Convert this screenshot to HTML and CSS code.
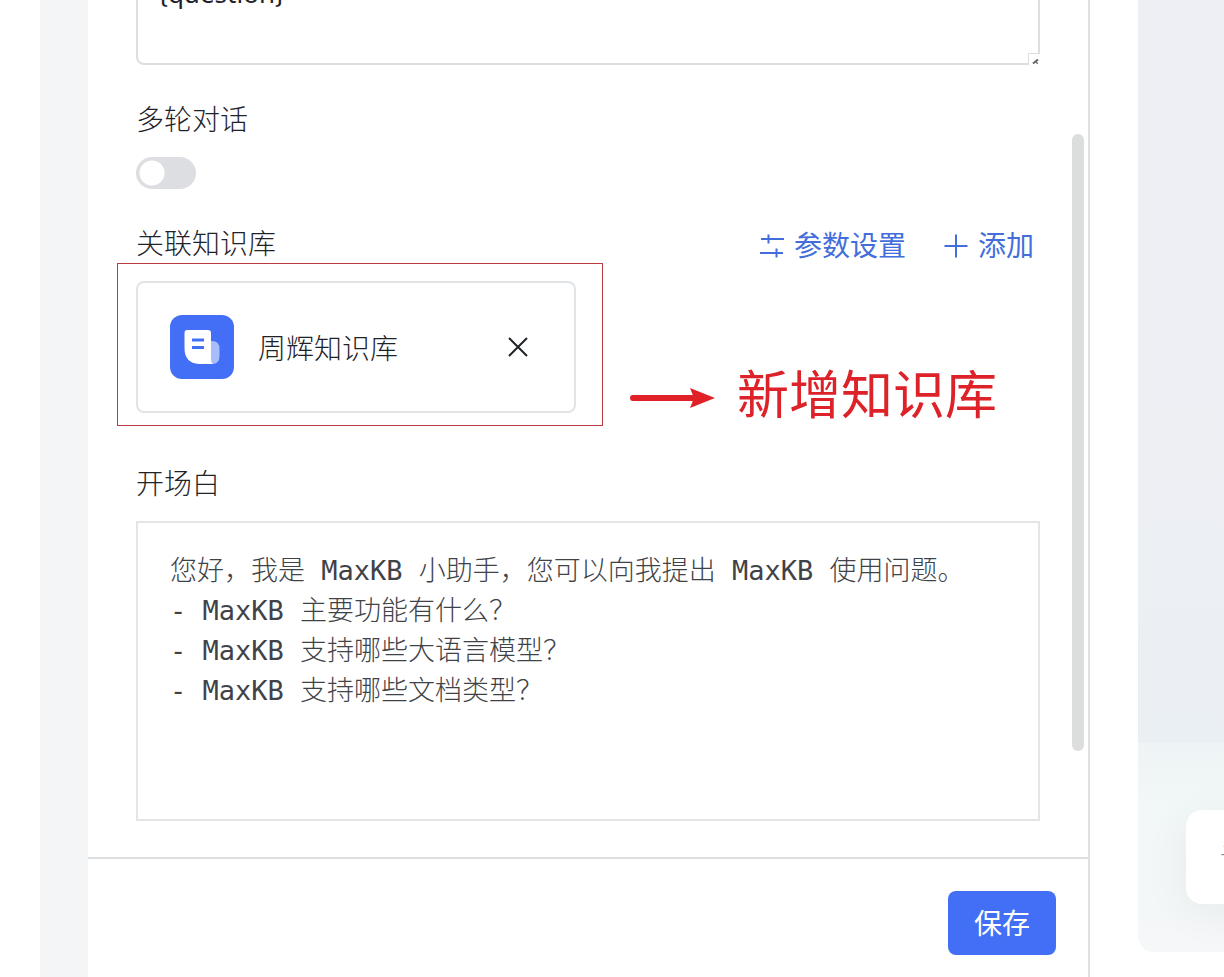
FILE: index.html
```html
<!DOCTYPE html>
<html lang="zh-CN">
<head>
<meta charset="utf-8">
<meta name="viewport" content="width=device-width, initial-scale=1">
<title>应用设置</title>
<link rel="stylesheet" href="styles.css">
</head>
<body>
<div class="app">
  <div class="gutter"></div>
  <main class="panel">
    <div class="panel-scroll">
      <form class="form" id="settings">
        <div class="prompt">
          <textarea class="prompt-input" aria-label="提示词">{question}</textarea>
          <svg class="resizer" viewBox="0 0 12 12" aria-hidden="true">
            <path class="resizer-edge" d="M.5 12V.5H12"/>
            <path class="resizer-grip" d="M5 10.500l5-4M8.500 10.500l1-1"/>
          </svg>
        </div>

        <div class="field">
          <label class="label" for="multi">多轮对话</label>
          <input class="switch" type="checkbox" role="switch" id="multi">
        </div>

        <section class="field" aria-labelledby="kb-title">
          <div class="field-head">
            <h2 class="label" id="kb-title">关联知识库</h2>
            <div class="actions">
              <button class="link-btn" type="button">
                <svg class="link-icon" viewBox="0 0 24 28" aria-hidden="true"><path d="M1 9h23M8.500 4.500v9M0 23h23M16.500 18.500v9"/></svg>
                <span>参数设置</span>
              </button>
              <button class="link-btn" type="button">
                <svg class="link-icon" viewBox="0 0 24 28" aria-hidden="true"><path d="M.5 16h23M12 4.500v23"/></svg>
                <span>添加</span>
              </button>
            </div>
          </div>
          <div class="kb-grid">
            <div class="kb-cell">
              <article class="kb-card">
                <svg class="kb-icon" viewBox="0 0 64 64" aria-hidden="true">
                  <rect width="64" height="64" rx="12" fill="#426ff5"/>
                  <path d="M38 26h4q7.500 0 7.500 8v7q0 8-7.500 8h-4z" fill="#a9bdfb"/>
                  <path d="M17 15h21q3 0 3 3v12q0 3 0 15 0 3 2.500 4H29Q14.500 48 14.500 33V18q0-3 2.500-3z" fill="#fff"/>
                  <path d="M22 25h12M22 32.500h12" stroke="#426ff5" stroke-width="3"/>
                </svg>
                <span class="kb-name">周辉知识库</span>
                <button class="close" type="button" aria-label="移除">
                  <svg class="close-icon" viewBox="0 0 20 20" aria-hidden="true"><path d="M1 1l18 18M19 1L1 19"/></svg>
                </button>
              </article>
              <div class="mark-box"></div>
            </div>
            <div class="mark-note">
              <svg class="mark-arrow" viewBox="0 0 85 36" aria-hidden="true">
                <path d="M3 24h64" stroke="#e02128" stroke-width="6" stroke-linecap="round"/>
                <path d="M60 14l25 10-25 10 4-10z" fill="#e02128"/>
              </svg>
              <span class="mark-text">新增知识库</span>
            </div>
          </div>
        </section>

        <div class="field">
          <label class="label" for="prologue">开场白</label>
          <textarea class="prologue" id="prologue">您好，我是 MaxKB 小助手，您可以向我提出 MaxKB 使用问题。
- MaxKB 主要功能有什么？
- MaxKB 支持哪些大语言模型？
- MaxKB 支持哪些文档类型？</textarea>
        </div>
      </form>
      <div class="scroll-thumb"></div>
    </div>
    <footer class="footer">
      <button class="save" type="submit" form="settings">保存</button>
    </footer>
  </main>
  <aside class="preview">
    <div class="preview-body"></div>
    <div class="preview-foot">
      <input class="ask" type="text" placeholder="请输入" aria-label="请输入">
    </div>
  </aside>
</div>
</body>
</html>
```
FILE: styles.css
```css
* { box-sizing: border-box; }

body {
  margin: 0;
  color: #1f2329;
  background: #fff;
  font-family: "Noto Sans CJK SC", sans-serif;
  font-size: 28px;
  font-weight: 300;
  line-height: 42px;
}

button, input, textarea { font: inherit; color: inherit; margin: 0; }
button { border: 0; padding: 0; background: none; cursor: pointer; }
svg { display: block; flex: none; }

.app {
  display: flex;
  height: 100vh;
  padding-left: 40px;
  overflow: hidden;
}

.gutter { flex: none; width: 48px; background: #f4f5f7; }

.panel {
  display: flex;
  flex: 1;
  flex-direction: column;
  min-width: 0;
  border-right: 2px solid #dfe1e1;
}

.panel-scroll {
  position: relative;
  display: flex;
  flex: 1;
  flex-direction: column;
  justify-content: flex-end;
  min-height: 0;
  overflow: hidden;
}

.form {
  display: flex;
  flex-direction: column;
  gap: 32px;
  padding: 0 48px 36px;
}

.scroll-thumb {
  position: absolute;
  top: 134px;
  right: 4px;
  width: 12px;
  height: 72%;
  border-radius: 6px;
  background: #dcdedd;
}

.prompt { position: relative; }

.prompt-input {
  display: block;
  width: 100%;
  height: 160px;
  padding: 64px 20px 0;
  border: 2px solid #dcdedf;
  border-radius: 8px;
  background: none;
  font-family: "Noto Sans", "Noto Sans CJK SC", sans-serif;
  font-size: 26px;
  font-weight: 400;
  line-height: 44px;
  resize: none;
}

.resizer {
  position: absolute;
  right: 0;
  bottom: 0;
  width: 12px;
  height: 12px;
  background: #fff;
  fill: none;
}
.resizer-edge { stroke: #dcdedf; }
.resizer-grip { stroke: #666; stroke-width: 2; }

.field { display: flex; flex-direction: column; gap: 18px; }
.field-head { display: flex; justify-content: space-between; }
.label { margin: 0; font-size: 28px; font-weight: 300; }

.switch {
  width: 60px;
  height: 32px;
  border-radius: 16px;
  background: radial-gradient(circle at 16px 16px, #fff 12px, #dcdee2 13px);
  appearance: none;
}

.actions { display: flex; gap: 38px; padding: 2px 6px 0 0; margin-bottom: -2px; }

.link-btn {
  display: flex;
  align-items: center;
  gap: 10px;
  color: #426ddb;
  font-weight: 400;
}

.link-icon {
  width: 24px;
  height: 28px;
  fill: none;
  stroke: #426ddb;
  stroke-width: 2;
}

.kb-grid {
  display: grid;
  grid-template-columns: 1fr 1fr;
  gap: 24px;
  padding-bottom: 16px;
}

.kb-cell { position: relative; }

.kb-card {
  display: flex;
  align-items: center;
  gap: 24px;
  padding: 32px;
  border: 2px solid #e1e4e6;
  border-radius: 8px;
}

.kb-icon { width: 64px; height: 64px; }
.kb-name { flex: 1; }

.close {
  display: grid;
  place-items: center;
  width: 48px;
  height: 48px;
}
.close-icon { width: 20px; height: 20px; stroke: #1f2329; stroke-width: 2; }

.mark-box {
  position: absolute;
  inset: -18px -27px -13px -19px;
  border: 1px solid #b83b42;
  pointer-events: none;
}

.mark-note {
  display: flex;
  align-items: center;
  gap: 22px;
  padding: 90px 0 0 30px;
  height: 132px;
}
.mark-arrow { width: 85px; height: 36px; }
.mark-text {
  color: #dd2229;
  font-size: 52px;
  font-weight: 400;
  line-height: 60px;
  white-space: nowrap;
}

.prologue {
  display: block;
  width: 100%;
  height: 300px;
  padding: 28px 32px;
  border: 2px solid #e4e6e6;
  border-radius: 0;
  background: none;
  color: #3f4347;
  font-family: "DejaVu Sans Mono", "Noto Sans CJK SC", monospace;
  font-size: 27px;
  line-height: 40px;
  resize: none;
}

.footer {
  display: flex;
  justify-content: flex-end;
  height: 120px;
  padding: 32px;
  border-top: 2px solid #dcdedf;
}

.save {
  width: 108px;
  height: 64px;
  padding-bottom: 2px;
  border-radius: 8px;
  background: #426ff5;
  color: #fff;
  font-weight: 400;
}

.preview {
  display: flex;
  flex: none;
  flex-direction: column;
  width: 86px;
  margin: 0 0 25px 48px;
  border-bottom-left-radius: 16px;
  overflow: hidden;
}

.preview-body {
  flex: 1;
  background: linear-gradient(#eeeff4 0%, #eeeff4 50%, #eaeff3 100%);
}

.preview-foot {
  padding: 67px 0 48px 48px;
  background: linear-gradient(#eef3f5, #f2f7f7 30%, #f5f7f8);
}

.ask {
  display: block;
  width: 240px;
  height: 94px;
  padding: 0 34px;
  border: 0;
  border-radius: 16px;
  background: #fff;
  box-shadow: 0 8px 48px rgba(31, 35, 41, 0.06);
}
.ask::placeholder { color: #8f959e; opacity: 1; }
```
